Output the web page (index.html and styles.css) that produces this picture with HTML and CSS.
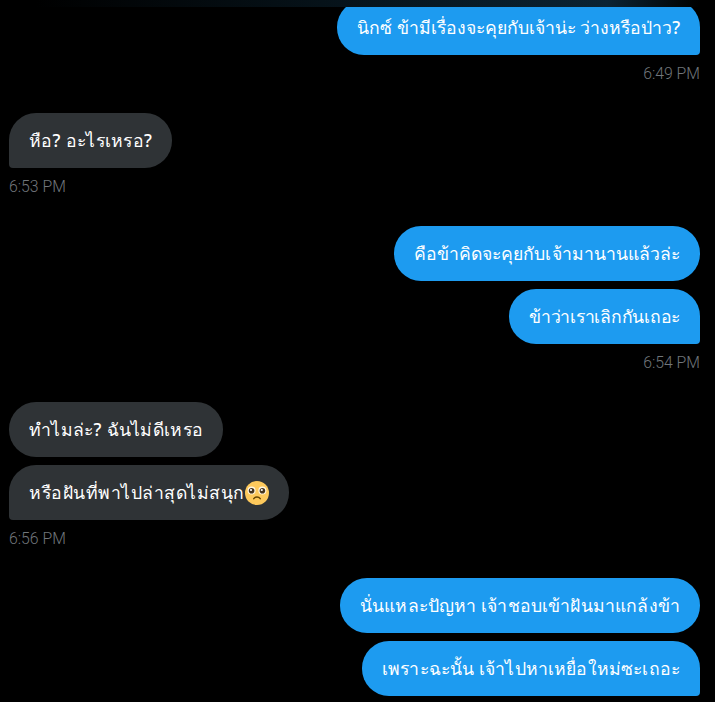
FILE: index.html
```html
<!DOCTYPE html>
<html lang="th">
<head>
<meta charset="utf-8">
<title>Chat</title>
<link rel="stylesheet" href="styles.css">
</head>
<body>
<div class="topfade"></div>
<main class="chat">
  <section class="group out">
    <p class="bubble last">นิกซ์ ข้ามีเรื่องจะคุยกับเจ้าน่ะ ว่างหรือป่าว?</p>
    <time class="stamp">6:49 PM</time>
  </section>
  <section class="group in">
    <p class="bubble last track-b">หือ? อะไรเหรอ?</p>
    <time class="stamp">6:53 PM</time>
  </section>
  <section class="group out">
    <p class="bubble track-d">คือข้าคิดจะคุยกับเจ้ามานานแล้วล่ะ</p>
    <p class="bubble last track-tight">ข้าว่าเราเลิกกันเถอะ</p>
    <time class="stamp">6:54 PM</time>
  </section>
  <section class="group in">
    <p class="bubble track-b">ทำไมล่ะ? ฉันไม่ดีเหรอ</p>
    <p class="bubble last track-c">หรือฝันที่พาไปล่าสุดไม่สนุก<svg class="emoji" viewBox="0 0 24 24" aria-hidden="true">
      <circle cx="12" cy="12" r="12" fill="#fdc95c"/>
      <circle cx="6.6" cy="9.6" r="4" fill="#fff6e2"/><circle cx="17.4" cy="9.6" r="4" fill="#fff6e2"/>
      <circle cx="6.6" cy="9.8" r="2.8" fill="#46351f"/><circle cx="17.4" cy="9.8" r="2.8" fill="#46351f"/>
      <circle cx="6" cy="9" r="1.1" fill="#fff"/><circle cx="16.8" cy="9" r="1.1" fill="#fff"/>
      <path d="M8.8 17.6c1.5-2.2 4.9-2.2 6.4 0" fill="none" stroke="#664500" stroke-width="1.5" stroke-linecap="round"/>
    </svg></p>
    <time class="stamp">6:56 PM</time>
  </section>
  <section class="group out">
    <p class="bubble track-a">นั่นแหละปัญหา เจ้าชอบเข้าฝันมาแกล้งข้า</p>
    <p class="bubble last track-a">เพราะฉะนั้น เจ้าไปหาเหยื่อใหม่ซะเถอะ</p>
  </section>
</main>
</body>
</html>
```
FILE: styles.css
```css
html, body {
  margin: 0;
  padding: 0;
  height: 702px;
  overflow: hidden;
  background: #000;
}
.topfade {
  position: absolute;
  top: 0;
  left: 0;
  width: 100%;
  height: 7px;
  background: linear-gradient(90deg, #000 5%, #061219 45%, #0b2333 85%, #000 98%);
  z-index: 1;
}
.chat {
  display: flex;
  flex-direction: column;
  gap: 28px;
  padding: 0 15px 0 9px;
  font-family: "Noto Sans", "Liberation Sans", sans-serif;
}
.group {
  display: flex;
  flex-direction: column;
  gap: 8px;
}
.out { align-items: flex-end; }
.in { align-items: flex-start; }
.bubble {
  margin: 0;
  box-sizing: border-box;
  display: flex;
  align-items: center;
  height: 55px;
  padding: 1px 20px 0;
  border-radius: 27px;
  font-size: 17.6px;
  font-weight: 500;
  color: #fff;
  white-space: nowrap;
}
.track-tight { letter-spacing: -0.25px; }
.track-d { letter-spacing: 0.04px; }
.track-a { letter-spacing: 0.15px; }
.track-b { letter-spacing: 0.3px; }
.track-c { letter-spacing: 0.5px; }
.out .bubble { background: #1d9bf0; }
.in .bubble { background: #2f3336; }
.out .last { border-bottom-right-radius: 4px; }
.in .last { border-bottom-left-radius: 4px; }
.stamp {
  font-family: Roboto, "Liberation Sans", sans-serif;
  font-weight: 300;
  font-size: 15.8px;
  line-height: 22px;
  color: #71767b;
  display: flex;
  align-items: flex-end;
  height: 22px;
}
.emoji {
  width: 24px;
  height: 24px;
  flex: none;
}
```
